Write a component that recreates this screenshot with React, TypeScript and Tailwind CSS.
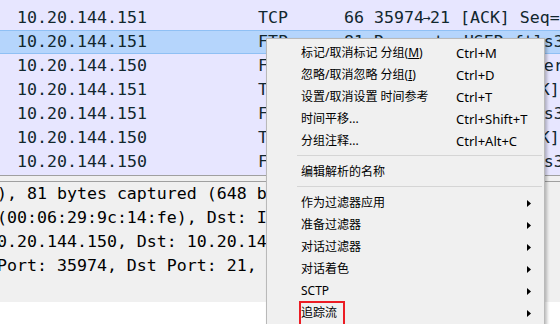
import React from "react";

interface Row {
  src: string;
  proto: string;
  info: React.ReactNode;
  selected?: boolean;
}

// the arrow in the capture comes from a narrower fallback font
const Arrow = () => (
  <span className="inline-block w-[6px] text-[13px] align-[1px] overflow-visible">
    <span className="-ml-[1px]">→</span>
  </span>
);

const rows: Row[] = [
  { src: "10.20.144.151", proto: "TCP", info: <>66 35974<Arrow />21 [ACK] Seq=1 Ack=1 Win=29312 Len=0</> },
  { src: "10.20.144.151", proto: "FTP", info: "81 Request: USER ftls3", selected: true },
  { src: "10.20.144.150", proto: "FTP", info: "100 Response: 331 User ftls3 OK" },
  { src: "10.20.144.151", proto: "TCP", info: <>66 35974<Arrow />21 [PSH, ACK] Seq=16</> },
  { src: "10.20.144.151", proto: "FTP", info: "88 Request: PASS ftls3" },
  { src: "10.20.144.150", proto: "TCP", info: <>66 21<Arrow />35974 [PSH, ACK] Seq=35</> },
  { src: "10.20.144.150", proto: "FTP", info: "96 Response: 230 ftls3 logged in" },
];

const details = [
  "), 81 bytes captured (648 bits) on interface 0",
  "(00:06:29:9c:14:fe), Dst: IntelCor_5a:3c:01",
  "0.20.144.150, Dst: 10.20.144.151",
  "Port: 35974, Dst Port: 21, Seq: 1, Ack: 1",
];

type Item =
  | { sep: true }
  | { sep?: false; label: React.ReactNode; shortcut?: string; sub?: boolean; boxed?: boolean };

const items: Item[] = [
  { label: <>标记/取消标记 分组(<span className="underline">M</span>)</>, shortcut: "Ctrl+M" },
  { label: <>忽略/取消忽略 分组(<span className="underline">I</span>)</>, shortcut: "Ctrl+D" },
  { label: "设置/取消设置 时间参考", shortcut: "Ctrl+T" },
  { label: "时间平移...", shortcut: "Ctrl+Shift+T" },
  { label: "分组注释...", shortcut: "Ctrl+Alt+C" },
  { sep: true },
  { label: "编辑解析的名称" },
  { sep: true },
  { label: "作为过滤器应用", sub: true },
  { label: "准备过滤器", sub: true },
  { label: "对话过滤器", sub: true },
  { label: "对话着色", sub: true },
  { label: "SCTP", sub: true },
  { label: "追踪流", sub: true, boxed: true },
];

const mono = "font-['DejaVu_Sans_Mono',monospace] text-[16.6px] text-[#12272e] whitespace-nowrap";

function ContextMenu() {
  return (
    <div className="absolute left-[266px] top-[38px] w-[279px] h-[300px] bg-[#f0f0f0] border border-[#b9b9b9] pt-[3px] shadow-[2px_2px_3px_rgba(0,0,0,0.25)] font-['Noto_Sans','Noto_Sans_CJK_SC',sans-serif] text-black">
      {items.map((it, i) =>
        it.sep ? (
          <div key={i} className="h-[9px] pt-[3px]">
            <div className="h-px ml-[30px] mr-[2px] bg-[#d5d5d5]" />
          </div>
        ) : (
          <div key={i} className="relative flex items-center h-[22px] pl-[34px]">
            <span className="w-[155px] text-[12px] leading-none whitespace-nowrap">{it.label}</span>
            <span className="flex-1 text-[13px] leading-none whitespace-nowrap">{it.shortcut}</span>
            {it.sub && (
              <svg width="4" height="7" viewBox="0 0 4 7" className="mr-[13px] shrink-0">
                <polygon points="0,0 4,3.5 0,7" fill="#000" />
              </svg>
            )}
            {it.boxed && (
              <div className="absolute left-[32px] top-[-1px] w-[46px] h-[26px] border-2 border-[#ec1c24]" />
            )}
          </div>
        )
      )}
    </div>
  );
}

export default function App() {
  return (
    <div className="relative w-[560px] h-[324px] overflow-hidden bg-white">
      {/* Packet list */}
      <div className="h-[175px] bg-[#e7e6ff] pt-[6px] overflow-hidden">
        {rows.map((r, i) => (
          <div
            key={i}
            className={`flex items-center h-[24px] ${mono} ${r.selected ? "bg-[#b5d5fc] border-y border-[#8fc0f4]" : ""}`}
          >
            <span className="w-[258px] pl-[17px] shrink-0">{r.src}</span>
            <span className="w-[86px] shrink-0">{r.proto}</span>
            <span>{r.info}</span>
          </div>
        ))}
      </div>

      {/* Splitter */}
      <div className="h-px bg-[#a0a0a0]" />
      <div className="h-[5px] bg-[#f0f0f0]" />
      <div className="h-px bg-[#a0a0a0]" />

      {/* Packet details */}
      <div className="h-[120px] bg-[#f0f0f0] overflow-hidden">
        {details.map((d, i) => (
          <div key={i} className={`h-[24px] flex items-center -ml-[3px] ${mono} text-black`}>
            {d}
          </div>
        ))}
      </div>

      <ContextMenu />
    </div>
  );
}
